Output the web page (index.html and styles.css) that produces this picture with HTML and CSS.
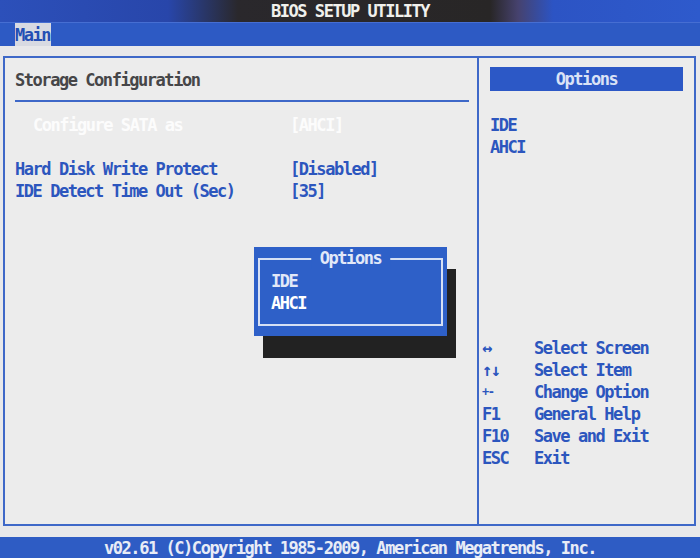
FILE: index.html
```html
<!DOCTYPE html>
<html>
    <head>
        <meta charset="UTF-8">
        <meta name="viewport" content="width=device-width,initial-scale=1">
        <title>BIOS Setup Utility</title>
        <link rel="stylesheet" href="styles.css">
    </head>
    <body>
        <div class="screen">
            <div class="titlebar">BIOS SETUP UTILITY</div>
            <div class="menubar">
                <span class="tab">Main</span>
            </div>
            <div class="workarea">
                <div class="frame">
                    <div class="panel-left">
                        <div class="section-title">Storage Configuration</div>
                        <div class="rows">
                            <div class="row selected"><span class="item-name indent">Configure SATA as</span><span class="item-value">[AHCI]</span></div>
                            <div class="row"></div>
                            <div class="row"><span class="item-name">Hard Disk Write Protect</span><span class="item-value">[Disabled]</span></div>
                            <div class="row"><span class="item-name">IDE Detect Time Out (Sec)</span><span class="item-value">[35]</span></div>
                        </div>
                    </div>
                    <div class="panel-right">
                        <div class="options-head">Options</div>
                        <div class="option-list">
                            <div class="row">IDE</div>
                            <div class="row">AHCI</div>
                        </div>
                        <div class="help">
                            <div class="row"><span class="key">&harr;</span><span>Select Screen</span></div>
                            <div class="row"><span class="key">&uarr;&darr;</span><span>Select Item</span></div>
                            <div class="row"><span class="key small">+-</span><span>Change Option</span></div>
                            <div class="row"><span class="key">F1</span><span>General Help</span></div>
                            <div class="row"><span class="key">F10</span><span>Save and Exit</span></div>
                            <div class="row"><span class="key">ESC</span><span>Exit</span></div>
                        </div>
                    </div>
                </div>
            </div>
            <div class="footer">v02.61 (C)Copyright 1985-2009, American Megatrends, Inc.</div>

            <div class="popup">
                <div class="popup-frame">
                    <div class="popup-title">Options</div>
                    <div class="row">IDE</div>
                    <div class="row active">AHCI</div>
                </div>
            </div>
        </div>
    </body>
</html>
```

FILE: styles.css
```css
*, *::before, *::after {
    box-sizing: border-box;
}
html, body {
    margin: 0;
    padding: 0;
}
body {
    background-color: rgb(232, 232, 234);
    font-family: "DejaVu Sans Mono", "Liberation Mono", monospace;
    font-size: 17px;
    font-weight: bold;
    letter-spacing: -1.45px;
    color: rgb(44, 86, 190);
}
.screen {
    position: relative;
    width: 700px;
    height: 558px;
    display: flex;
    flex-direction: column;
    overflow: hidden;
}
.titlebar {
    height: 22px;
    display: flex;
    align-items: center;
    justify-content: center;
    color: rgb(240, 240, 236);
    background: linear-gradient(90deg, rgb(44, 80, 186) 0%, rgb(40, 70, 170) 24%, rgb(42, 40, 44) 34%, rgb(40, 38, 38) 70%, rgb(70, 66, 110) 74%, rgb(44, 84, 196) 79%, rgb(46, 90, 204) 100%);
}
.menubar {
    height: 24px;
    display: flex;
    align-items: stretch;
    padding-left: 15px;
    background-color: rgb(45, 90, 196);
    border-top: 1px solid rgb(70, 110, 210);
}
.tab {
    display: flex;
    align-items: center;
    padding: 0 1px 0 0;
    background-color: rgb(216, 218, 226);
    color: rgb(36, 78, 180);
}
.workarea {
    flex: 1;
    padding: 10px 4px 11px 3px;
}
.frame {
    height: 100%;
    display: grid;
    grid-template-columns: 474px 1fr;
    border: 2px solid rgb(62, 104, 200);
    background-color: rgb(236, 236, 236);
}
.panel-left {
    padding: 0 8px 0 10px;
    border-right: 2px solid rgb(62, 104, 200);
}
.section-title {
    height: 44px;
    display: flex;
    align-items: center;
    padding-top: 1px;
    color: rgb(70, 70, 72);
    border-bottom: 2px solid rgb(62, 104, 200);
}
.rows {
    padding-top: 12px;
}
.row {
    height: 22px;
    display: flex;
    align-items: center;
    white-space: pre;
}
.item-name {
    width: 275px;
}
.indent {
    padding-left: 18px;
}
.selected {
    color: rgb(252, 252, 252);
}
.panel-right {
    display: flex;
    flex-direction: column;
    padding: 9px 11px 0 11px;
}
.options-head {
    height: 24px;
    display: flex;
    align-items: center;
    justify-content: center;
    background-color: rgb(44, 88, 198);
    color: rgb(218, 226, 246);
}
.option-list {
    padding-top: 23px;
}
.help {
    margin-top: auto;
    margin-left: -8px;
    padding-bottom: 55px;
}
.key {
    width: 52px;
}
.small {
    font-size: 12px;
}
.footer {
    height: 21px;
    display: flex;
    align-items: center;
    justify-content: center;
    background-color: rgb(46, 92, 196);
    color: rgb(232, 236, 246);
}
.popup {
    position: absolute;
    left: 254px;
    top: 247px;
    width: 193px;
    height: 89px;
    padding: 11px 4px 10px 4px;
    background-color: rgb(46, 96, 200);
    box-shadow: 9px 22px 0 rgb(34, 34, 34);
    color: rgb(226, 232, 248);
}
.popup-frame {
    position: relative;
    height: 100%;
    padding: 10px 0 0 11px;
    border: 2px solid rgb(214, 224, 244);
}
.popup-title {
    position: absolute;
    top: -13px;
    left: 50%;
    transform: translateX(-50%);
    padding: 0 9px;
    line-height: 22px;
    background-color: rgb(46, 96, 200);
}
.popup .row {
    height: 22px;
}
.popup .active {
    color: rgb(255, 255, 255);
}
```
